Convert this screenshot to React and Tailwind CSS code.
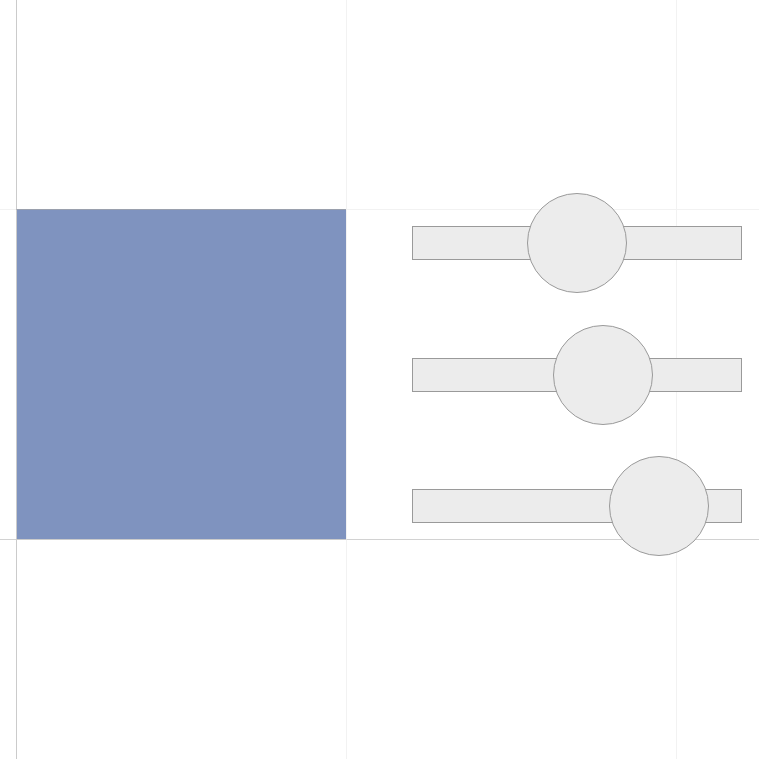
import React from 'react';

// canvas guide cells: 4 columns x 3 rows
const cells = [
  'col-start-1 row-start-1',
  'col-start-2 row-start-1 border-l border-[#cbcbcb]',
  'col-start-3 row-start-1 border-l border-[#f2f2f2]',
  'col-start-4 row-start-1 border-l border-[#f2f2f2]',
  'col-start-1 row-start-2 border-t border-[#f2f2f2]',
  'col-start-3 row-start-2 border-l border-t border-[#f2f2f2]',
  'col-start-4 row-start-2 border-l border-t border-[#f2f2f2]',
  'col-start-1 row-start-3 border-t border-[#d2d2d2]',
  'col-start-2 row-start-3 border-l border-t border-[#cbcbcb]',
  'col-start-3 row-start-3 border-l border-t border-l-[#f2f2f2] border-t-[#d2d2d2]',
  'col-start-4 row-start-3 border-l border-t border-l-[#f2f2f2] border-t-[#d2d2d2]',
];

const sliders = [
  { id: 'a', value: 50 },
  { id: 'b', value: 57.9 },
  { id: 'c', value: 75.1 },
];

function Slider({ value }) {
  return (
    <div className="relative h-[34px] w-[330px] border border-[#9a9a9a] bg-[#ececec]">
      <div
        className="absolute top-1/2 h-[100px] w-[100px] -translate-x-1/2 -translate-y-1/2 rounded-full border border-[#9a9a9a] bg-[#ececec]"
        style={{ left: `${value}%` }}
      />
    </div>
  );
}

export default function App() {
  return (
    <div className="grid h-[759px] w-[759px] grid-cols-[16px_330px_330px_83px] grid-rows-[209px_330px_220px] overflow-hidden bg-white">
      {cells.map((c, i) => (
        <div key={i} className={c} />
      ))}

      <div className="col-start-2 row-start-2 border-l border-t border-l-[#cbcbcb] border-t-[#9aa0ad] bg-[#7f93bf]" />

      <div className="col-span-2 col-start-3 row-start-2 flex flex-col gap-[97.5px] pl-[66px] pt-[17px]">
        {sliders.map((s) => (
          <Slider key={s.id} value={s.value} />
        ))}
      </div>
    </div>
  );
}
